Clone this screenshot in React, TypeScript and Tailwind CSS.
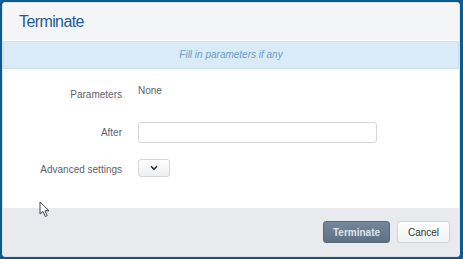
import React from 'react';
import { ChevronDown } from 'lucide-react';

const font = { fontFamily: '"Liberation Sans", Arial, sans-serif' };

/* ──────────────────────────── Pieces ──────────────────────────── */

const Label: React.FC<{ children: React.ReactNode; className?: string }> = ({ children, className }) => (
  <div className={`w-[135px] shrink-0 pr-[16px] text-right text-[10px] leading-[14px] text-[#5f6368] ${className ?? ''}`}>
    {children}
  </div>
);

const Cursor = () => (
  <svg
    className="absolute left-[39px] top-[201px]"
    width="12"
    height="17"
    viewBox="0 0 12 17"
  >
    <path
      d="M1 1 L1 13 L4 10.5 L6.3 15.5 L8.2 14.6 L6 9.8 L10 9.8 Z"
      fill="#fff"
      stroke="#3d4350"
      strokeWidth="1"
      strokeLinejoin="round"
    />
  </svg>
);

/* ────────────────────────────── App ───────────────────────────── */

export default function App() {
  return (
    <div
      className="relative w-[463px] h-[259px] bg-[#0b5a90] pl-[2px] pt-[2px] pr-[3px] pb-[2px]"
      style={font}
    >
      <div className="flex h-full w-full flex-col overflow-hidden rounded-[3px] border border-[#dfe2e6] bg-white">
        {/* Header */}
        <div className="h-[38px] shrink-0 border-b border-white bg-[#f4f5f7] pl-[16px] pt-[9px]">
          <h2 className="text-[16px] leading-[20px] tracking-[-0.6px] text-[#1d5d8e]">Terminate</h2>
        </div>

        {/* Info */}
        <div className="h-[28px] shrink-0 border border-[#c7e2f1] bg-[#d8ebf6] text-center text-[10px] italic leading-[26px] text-[#6f9cc2]">
          Fill in parameters if any
        </div>

        {/* Form */}
        <div className="flex flex-1 flex-col pt-[15px]">
          <div className="flex items-start">
            <Label className="mt-[4px]">Parameters</Label>
            <div className="text-[10px] leading-[14px] text-[#5f6368]">None</div>
          </div>

          <div className="mt-[20px] flex items-center">
            <Label>After</Label>
            <input
              type="text"
              className="h-[21px] w-[239px] rounded-[3px] border border-[#d5d7da] bg-white outline-none"
            />
          </div>

          <div className="mt-[16px] flex items-center">
            <Label className="mt-[3px]">Advanced settings</Label>
            <button className="flex h-[18px] w-[32px] items-center justify-center rounded-[3px] border border-[#d3d5d8] bg-gradient-to-b from-white to-[#eeeff1]">
              <ChevronDown className="h-[10px] w-[10px] text-[#2b2f36]" strokeWidth={4} />
            </button>
          </div>
        </div>

        {/* Footer */}
        <div className="flex h-[48px] shrink-0 items-center justify-end gap-[7px] bg-[#e9eaee] pr-[9px]">
          <button className="h-[22px] w-[67px] rounded-[3px] border border-[#56687a] bg-gradient-to-b from-[#74879a] to-[#5f7183] text-[10px] font-bold text-[#dde5ec]">
            Terminate
          </button>
          <button className="h-[22px] w-[53px] rounded-[3px] border border-[#cfd2d6] bg-gradient-to-b from-white to-[#f1f2f4] text-[10px] text-[#333]">
            Cancel
          </button>
        </div>
      </div>

      <Cursor />
    </div>
  );
}
